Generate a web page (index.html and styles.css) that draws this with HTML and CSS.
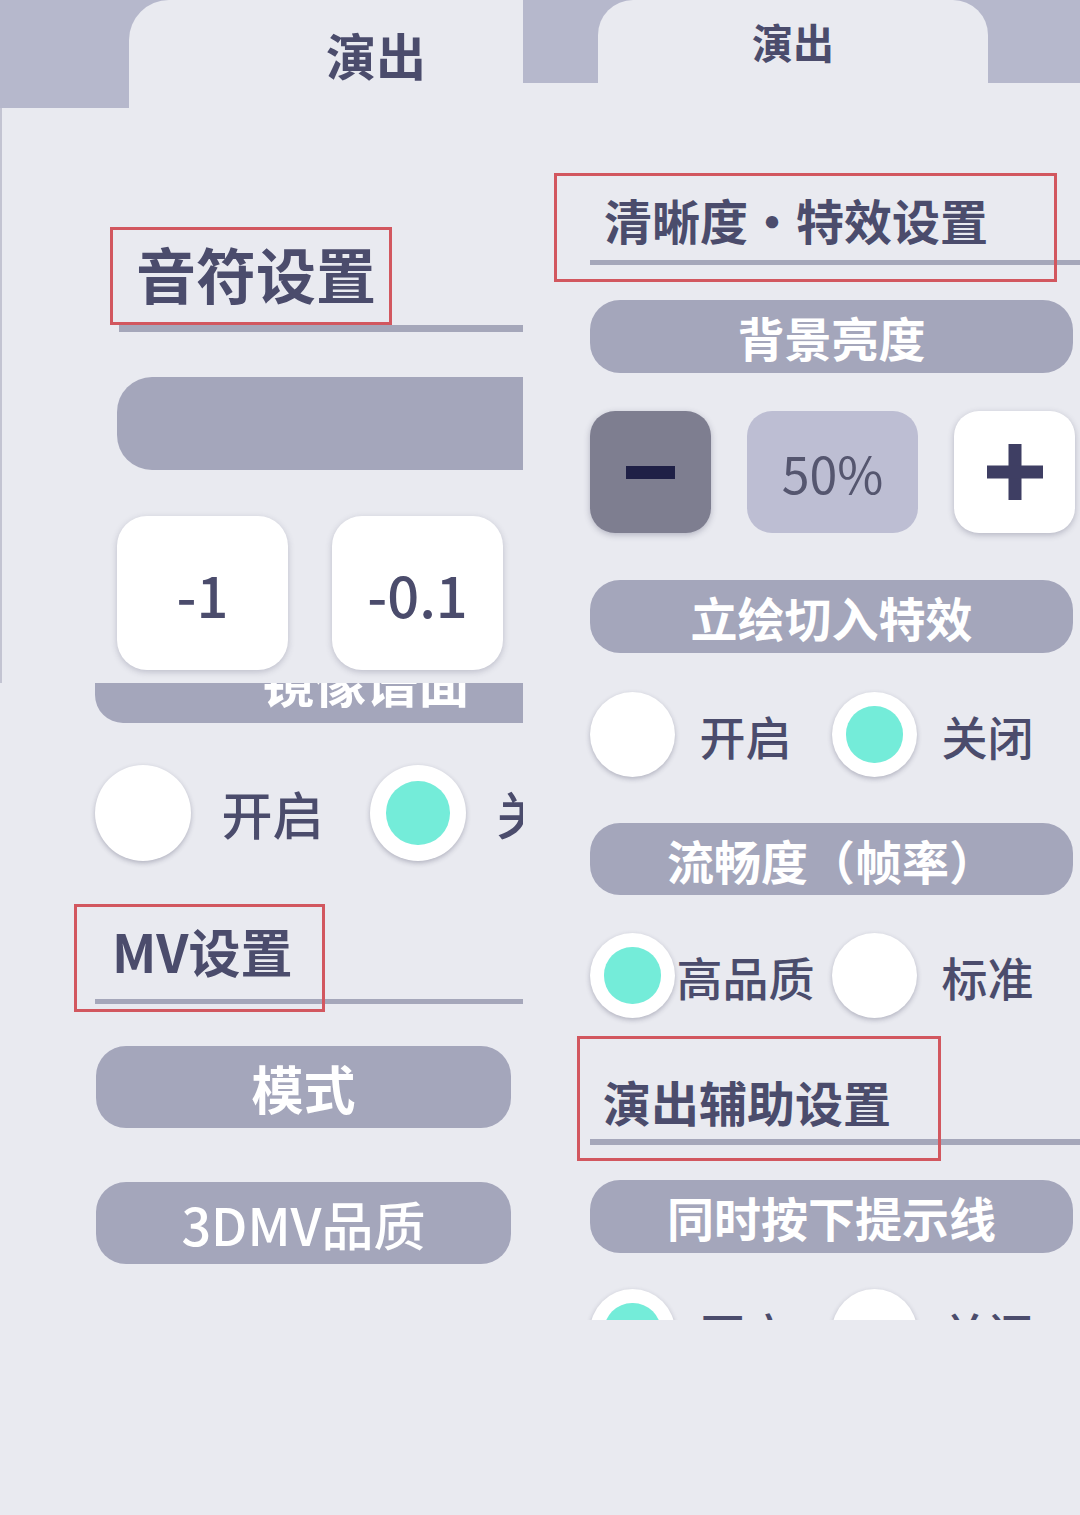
FILE: index.html
```html
<!DOCTYPE html>
<html lang="zh-CN">

<head>
    <meta charset="UTF-8">
    <meta name="viewport" content="width=device-width, initial-scale=1.0">
    <title>演出设置</title>
    <link rel="stylesheet" href="styles.css">
</head>

<body>

    <div class="collage">

        <div class="col">
            <!-- note settings -->
            <section class="shot shot-a">
                <div class="tabbar tabbar-a">
                    <div class="tab tab-a">演出</div>
                </div>
                <h2 class="sec-title title-a"><span class="mark mark-a"></span>音符设置</h2>
                <div class="bar bar-a"></div>
                <div class="steps">
                    <div class="step">-1</div>
                    <div class="step">-0.1</div>
                </div>
            </section>

            <!-- mirror + MV settings -->
            <section class="shot shot-b">
                <div class="bar bar-mirror">镜像谱面</div>
                <div class="options options-b">
                    <div class="opt"><span class="radio"></span><span class="opt-text">开启</span></div>
                    <div class="opt"><span class="radio on"></span><span class="opt-text">关闭</span></div>
                </div>
                <h2 class="sec-title title-mv"><span class="mark mark-mv"></span>MV设置</h2>
                <div class="bar bar-b bar-mode">模式</div>
                <div class="bar bar-b bar-quality">3DMV品质</div>
            </section>
        </div>

        <!-- quality / effects -->
        <section class="shot shot-c">
            <div class="tabbar tabbar-c">
                <div class="tab tab-c">演出</div>
            </div>

            <h2 class="sec-title title-fx"><span class="mark mark-fx"></span>清晰度・特效设置</h2>

            <div class="bar bar-c bar-bright">背景亮度</div>
            <div class="stepper">
                <div class="stepper-btn minus"><span class="minus-line"></span></div>
                <div class="stepper-value">50%</div>
                <div class="stepper-btn plus">
                    <svg width="56" height="56" viewBox="0 0 56 56">
                        <rect x="21.5" y="0" width="13" height="56" fill="#3e3e63" />
                        <rect x="0" y="21.5" width="56" height="13" fill="#3e3e63" />
                    </svg>
                </div>
            </div>

            <div class="bar bar-c bar-cutin">立绘切入特效</div>
            <div class="options options-c row-cutin">
                <div class="opt"><span class="radio"></span><span class="opt-text">开启</span></div>
                <div class="opt"><span class="radio on"></span><span class="opt-text">关闭</span></div>
            </div>

            <div class="bar bar-c bar-fps">流畅度（帧率）</div>
            <div class="options options-c row-fps">
                <div class="opt"><span class="radio on"></span><span class="opt-text">高品质</span></div>
                <div class="opt"><span class="radio"></span><span class="opt-text">标准</span></div>
            </div>

            <h2 class="sec-title title-assist"><span class="mark mark-assist"></span>演出辅助设置</h2>

            <div class="bar bar-c bar-guide">同时按下提示线</div>
            <div class="options options-c row-guide">
                <div class="opt"><span class="radio on"></span><span class="opt-text">开启</span></div>
                <div class="opt"><span class="radio"></span><span class="opt-text">关闭</span></div>
            </div>
        </section>

    </div>

</body>

</html>
```

FILE: styles.css
```css
body {
    margin: 0;
    padding: 0;
    background-color: #e9eaf0;
    font-family: "Noto Sans CJK SC", "Noto Sans", sans-serif;
    color: #4b4c6c;
}

.collage {
    display: grid;
    grid-template-columns: 523px 557px;
    width: 1080px;
    height: 1515px;
    overflow: hidden;
}

.shot {
    position: relative;
    overflow: hidden;
    background-color: #e9eaf0;
}

.shot-a {
    height: 683px;
    box-shadow: inset 2px 0 #c3c4d2;
}

.shot-b {
    height: 832px;
}

.shot-c {
    height: 1320px;
}

/* tab strip */
.tabbar {
    display: flex;
    background-color: #b6b8cc;
}

.tab {
    flex: none;
    background-color: #e9eaf0;
    text-align: center;
    font-weight: 700;
    color: #4b4c6c;
}

.tabbar-a {
    height: 108px;
    padding-left: 129px;
}

.tab-a {
    width: 494px;
    border-top-left-radius: 40px;
    font-size: 50px;
    line-height: 108px;
}

.tabbar-c {
    height: 83px;
    padding-left: 75px;
}

.tab-c {
    width: 390px;
    border-radius: 35px 35px 0 0;
    font-size: 41px;
    line-height: 83px;
}

/* section headings with underline */
.sec-title {
    position: relative;
    margin: 0;
    font-weight: 700;
    color: #4b4c6c;
    border-bottom: 5px solid #a5a7ba;
    white-space: nowrap;
}

/* red highlight frame */
.mark {
    position: absolute;
    box-sizing: border-box;
    border: 3px solid #d2575f;
}

.title-a {
    margin: 135px 0 0 119px;
    padding: 0 0 22px 17px;
    font-size: 60px;
    line-height: 60px;
    border-bottom-width: 7px;
}

.mark-a {
    left: -9px;
    top: -16px;
    width: 282px;
    height: 98px;
}

.title-mv {
    margin: 64px 0 0 95px;
    padding: 0 0 22px 17px;
    font-size: 52px;
    line-height: 52px;
}

.mark-mv {
    left: -21px;
    top: -21px;
    width: 251px;
    height: 108px;
}

.title-fx {
    margin: 112px 0 0 67px;
    padding: 0 0 17px 14px;
    font-size: 48px;
    line-height: 48px;
}

.mark-fx {
    left: -36px;
    top: -22px;
    width: 503px;
    height: 109px;
}

.title-assist {
    margin: 59px 0 0 67px;
    padding: 0 0 14px 13px;
    font-size: 48px;
    line-height: 48px;
    border-bottom-width: 6px;
}

.mark-assist {
    left: -13px;
    top: -41px;
    width: 364px;
    height: 125px;
}

/* grey label bars */
.bar {
    display: flex;
    align-items: center;
    justify-content: center;
    flex: none;
    background-color: #a4a6bb;
    color: #fff;
    font-weight: 700;
    white-space: nowrap;
}

.bar-a {
    margin: 45px 0 0 117px;
    width: 520px;
    height: 93px;
    border-radius: 35px;
}

.bar-mirror {
    margin: -45px 0 0 95px;
    width: 542px;
    height: 85px;
    border-radius: 28px;
    font-size: 52px;
}

.bar-b {
    margin-left: 96px;
    width: 415px;
    height: 82px;
    border-radius: 30px;
    font-size: 52px;
}

.bar-mode {
    margin-top: 42px;
}

.bar-quality {
    margin-top: 54px;
    font-weight: 500;
}

.bar-c {
    margin-left: 67px;
    width: 483px;
    height: 73px;
    border-radius: 30px;
    font-size: 47px;
}

.bar-bright {
    margin-top: 35px;
}

.bar-cutin {
    margin-top: 47px;
}

.bar-fps {
    margin-top: 46px;
    height: 72px;
}

.bar-guide {
    margin-top: 35px;
}

/* -1 / -0.1 buttons */
.steps {
    display: flex;
    gap: 44px;
    margin: 46px 0 0 117px;
}

.step {
    display: flex;
    align-items: center;
    justify-content: center;
    width: 171px;
    height: 154px;
    border-radius: 30px;
    background-color: #fff;
    box-shadow: 0 2px 6px rgba(60, 60, 90, 0.25);
    font-size: 56px;
    font-weight: 500;
    color: #4b4c6c;
}

/* brightness stepper */
.stepper {
    display: flex;
    gap: 36px;
    margin: 38px 0 0 67px;
}

.stepper-btn,
.stepper-value {
    display: flex;
    align-items: center;
    justify-content: center;
    height: 122px;
    border-radius: 25px;
}

.stepper-btn {
    width: 121px;
    box-shadow: 0 2px 6px rgba(60, 60, 90, 0.3);
}

.minus {
    background-color: #7e7e90;
}

.minus-line {
    width: 49px;
    height: 13px;
    background-color: #1f2046;
}

.plus {
    background-color: #fff;
}

.stepper-value {
    width: 171px;
    background-color: #bdbed3;
    font-size: 50px;
    color: #55566f;
}

/* radio options */
.options {
    display: flex;
}

.opt {
    display: flex;
    align-items: center;
    flex: none;
}

.radio {
    display: flex;
    align-items: center;
    justify-content: center;
    flex: none;
    border-radius: 50%;
    background-color: #fff;
    box-shadow: 0 2px 5px rgba(50, 50, 80, 0.3);
}

.radio.on::after {
    content: "";
    width: 66%;
    height: 66%;
    border-radius: 50%;
    background-color: #74ecd9;
}

.opt-text {
    flex: none;
    text-align: center;
    white-space: nowrap;
    font-weight: 500;
    color: #4b4c6c;
}

.options-b {
    margin: 42px 0 0 95px;
}

.options-b .opt {
    width: 275px;
}

.options-b .radio {
    width: 96px;
    height: 96px;
}

.options-b .opt-text {
    width: 163px;
    font-size: 51px;
}

.options-c {
    margin-left: 67px;
}

.options-c .opt {
    width: 242px;
}

.options-c .radio {
    width: 85px;
    height: 85px;
}

.options-c .opt-text {
    width: 141px;
    font-size: 46px;
}

.row-cutin {
    margin-top: 39px;
}

.row-fps {
    margin-top: 38px;
}

.row-guide {
    margin-top: 36px;
}
```
